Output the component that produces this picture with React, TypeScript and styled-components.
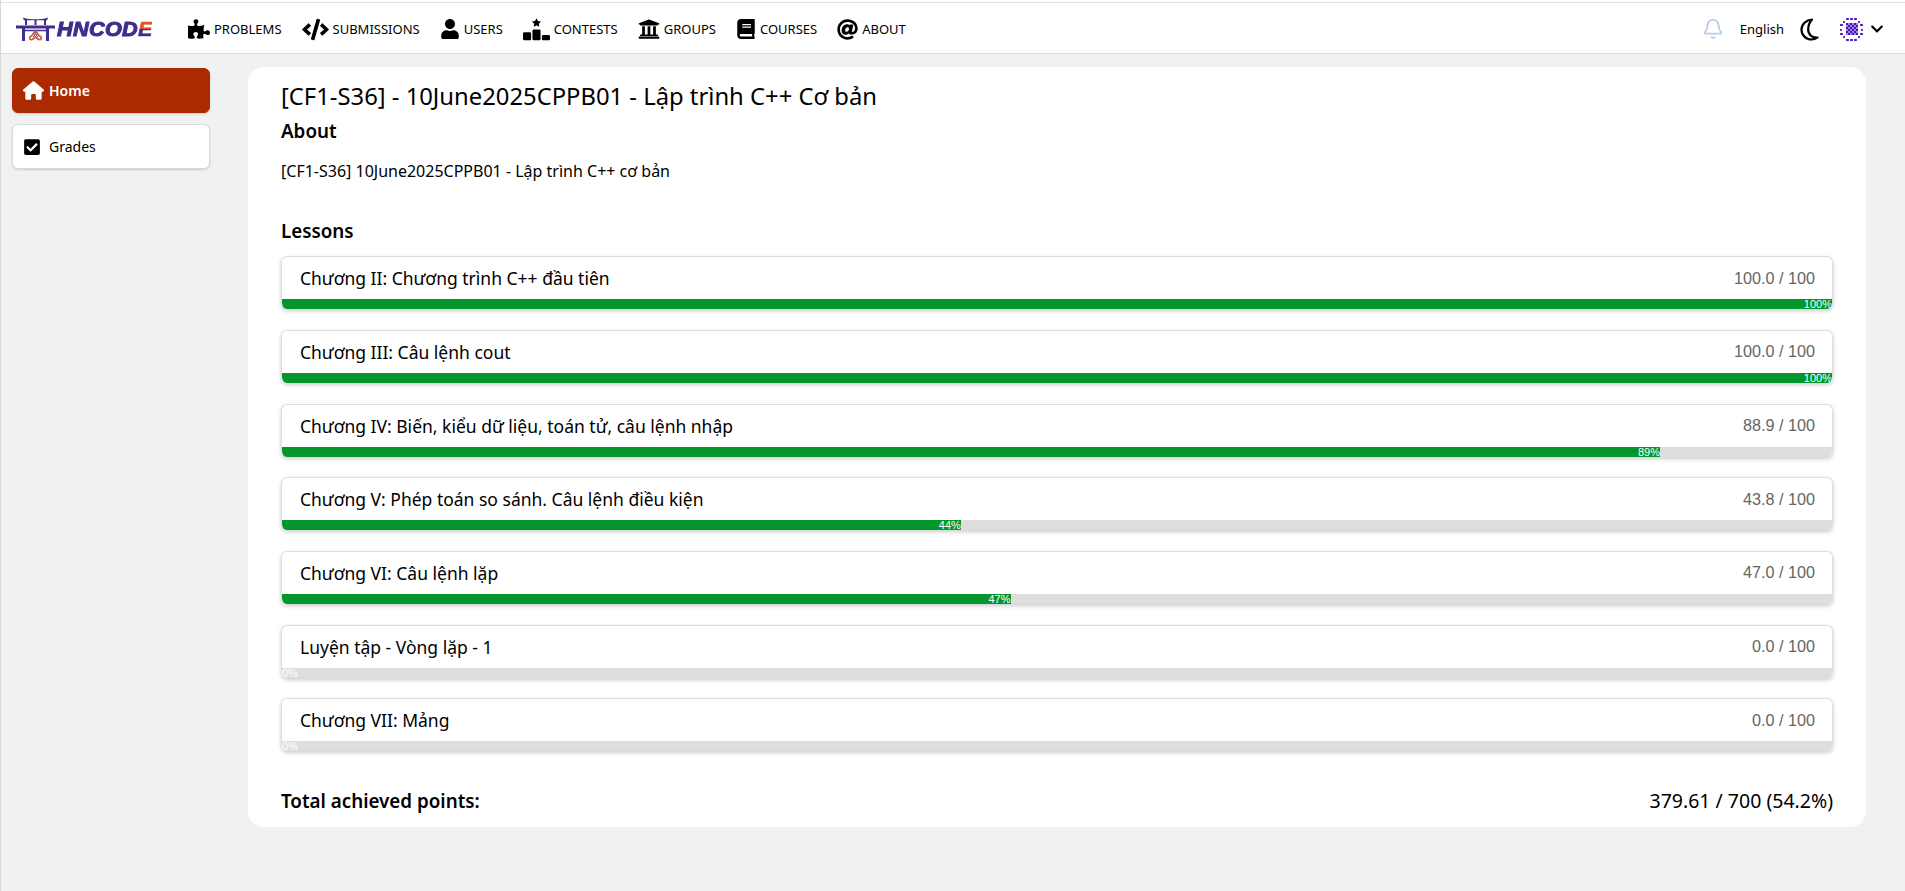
import React from 'react';
import styled, { createGlobalStyle } from 'styled-components';
import {
    FaAt,
    FaBook,
    FaCheckSquare,
    FaChevronDown,
    FaCode,
    FaPuzzlePiece,
    FaUniversity,
    FaUser,
} from 'react-icons/fa';
import { FaHouse, FaRankingStar } from 'react-icons/fa6';
import { Bell } from 'lucide-react';

const GlobalStyle = createGlobalStyle`
    html, body {
        margin: 0;
        padding: 0;
        background: #f0f2f1;
    }
    * {
        box-sizing: border-box;
    }
`;

const Page = styled.div`
    min-height: 891px;
    background: #f0f2f1;
    border-left: 1px solid #d8d8d8;
    font-family: "Noto Sans", sans-serif;
    color: #000;
`;

const TopBar = styled.header`
    height: 54px;
    background: #fff;
    border-top: 2px solid #fff;
    border-bottom: 1px solid #dcdcdc;
    box-shadow: inset 0 1px 0 #e2e2e2;
    display: flex;
    align-items: center;
    justify-content: space-between;
    padding: 3px 21px 0 15px;
`;

const LeftGroup = styled.div`
    display: flex;
    align-items: center;
`;

const Logo = styled.div`
    display: flex;
    align-items: center;
    width: 172px;
    gap: 2px;
`;

const LogoText = styled.span`
    font-family: "Liberation Sans", sans-serif;
    font-size: 19.5px;
    font-weight: 700;
    font-style: italic;
    letter-spacing: 0.3px;
    color: #3f2d8e;
    -webkit-text-stroke: 1px #3f2d8e;
    transform: scaleX(1.11);
    transform-origin: left center;
`;

const LogoAccent = styled.span`
    background: linear-gradient(to bottom, #e2552b 0 48%, #3f2d8e 48% 100%);
    -webkit-background-clip: text;
    background-clip: text;
    color: transparent;
    -webkit-text-stroke: 0.5px transparent;
`;

const NavList = styled.nav`
    display: flex;
    align-items: center;
    gap: 20px;
`;

const NavItem = styled.a`
    display: flex;
    align-items: center;
    gap: 4px;
    font-size: 13px;
    line-height: 18px;
    text-transform: uppercase;
    color: #000;
`;

const RightGroup = styled.div`
    display: flex;
    align-items: center;
`;

const LangLabel = styled.span`
    font-size: 13px;
    margin: 0 16px 0 16px;
`;

const Avatar = styled.svg`
    margin-left: 21px;
    margin-right: 7px;
`;

const Layout = styled.div`
    display: flex;
    align-items: flex-start;
    padding: 13px 38px 0 11px;
`;

const Sidebar = styled.aside`
    width: 198px;
    margin-right: 38px;
    display: flex;
    flex-direction: column;
    gap: 11px;
    margin-top: 1px;
`;

const SideItem = styled.a<{ $active?: boolean }>`
    height: 45px;
    display: flex;
    align-items: center;
    gap: 5px;
    padding-left: 10px;
    border-radius: 6px;
    font-size: 14px;
    font-weight: ${({ $active }) => ($active ? 600 : 400)};
    background: ${({ $active }) => ($active ? '#ab2a00' : '#fff')};
    color: ${({ $active }) => ($active ? '#fff' : '#000')};
    border: 1px solid ${({ $active }) => ($active ? '#ab2a00' : '#d9d9d9')};
    box-shadow: 0 1px 2px rgba(0, 0, 0, 0.15);
`;

const SideIcon = styled.span`
    width: 21px;
    display: flex;
    justify-content: flex-start;
`;

const Card = styled.main`
    width: 1618px;
    height: 760px;
    background: #fff;
    border-radius: 16px;
    padding: 12px 33px 0;
`;

const Title = styled.h2`
    margin: 0 0 5px;
    font-size: 23.8px;
    font-weight: 400;
    line-height: 34px;
`;

const SectionTitle = styled.h4`
    margin: 0;
    font-size: 18.8px;
    font-weight: 600;
    line-height: 26px;
`;

const AboutText = styled.p`
    margin: 16px 0 0;
    font-size: 16px;
    line-height: 22px;
`;

const LessonsBlock = styled.section`
    margin-top: 36px;
    display: flex;
    flex-direction: column;
    gap: 20.7px;
`;

const LessonList = styled.div`
    display: flex;
    flex-direction: column;
    gap: 20.7px;
    margin-top: -8.5px;
`;

const LessonRow = styled.div`
    height: 53px;
    display: flex;
    flex-direction: column;
    border: 1px solid #dedede;
    border-bottom: none;
    border-radius: 6px;
    overflow: hidden;
    box-shadow: 0 2px 4px rgba(0, 0, 0, 0.2);
`;

const LessonHead = styled.div`
    flex: 1;
    display: flex;
    align-items: center;
    justify-content: space-between;
    padding: 0 17px 0 18px;
    font-size: 17.5px;
`;

const LessonScore = styled.span`
    font-family: "Liberation Sans", sans-serif;
    color: #666;
    font-size: 16.2px;
`;

const Track = styled.div`
    height: 10px;
    background: #dedede;
`;

const Fill = styled.div`
    height: 100%;
    background: #02962c;
    color: #fff;
    font-family: "Liberation Sans", sans-serif;
    font-size: 11px;
    line-height: 11px;
    text-align: right;
    white-space: nowrap;
`;

const TotalRow = styled.div`
    margin-top: 36.5px;
    display: flex;
    justify-content: space-between;
    align-items: center;
    font-size: 19.5px;
    line-height: 26px;
`;

const TotalLabel = styled.span`
    font-size: 18.8px;
    font-weight: 600;
`;

interface Lesson {
    title: string;
    score: string;
    percent: number;
    label: string;
}

const lessons: Lesson[] = [
    { title: 'Chương II: Chương trình C++ đầu tiên', score: '100.0 / 100', percent: 100, label: '100%' },
    { title: 'Chương III: Câu lệnh cout', score: '100.0 / 100', percent: 100, label: '100%' },
    { title: 'Chương IV: Biến, kiểu dữ liệu, toán tử, câu lệnh nhập', score: '88.9 / 100', percent: 88.9, label: '89%' },
    { title: 'Chương V: Phép toán so sánh. Câu lệnh điều kiện', score: '43.8 / 100', percent: 43.8, label: '44%' },
    { title: 'Chương VI: Câu lệnh lặp', score: '47.0 / 100', percent: 47, label: '47%' },
    { title: 'Luyện tập - Vòng lặp - 1', score: '0.0 / 100', percent: 0, label: '0%' },
    { title: 'Chương VII: Mảng', score: '0.0 / 100', percent: 0, label: '0%' },
];

const GateIcon = () => (
    <svg width="39" height="24" viewBox="0 0 39 24" fill="none">
        {/* roof with raised ends */}
        <path d="M7 .5c4 1.500 8 1.800 12.500 1.800S28 2 32 .5l-.8 2.800H7.800z" fill="#3f2d8e" />
        <path d="M18.500 3h2v5h-2zM9 3h2v5H9zM28 3h2v5h-2z" fill="#3f2d8e" />
        {/* main beam */}
        <path d="M0 8.500h39V11.500H0z" fill="#3f2d8e" />
        <path d="M7.500 11v13M31.500 11v13" stroke="#3f2d8e" strokeWidth="3" />
        <path d="M9 13.500h21" stroke="#3f2d8e" strokeWidth="1.500" />
        <path d="M14.500 22.500c-1.800-1.200-.5-3.300 1.300-3.800l3.700-5 3.700 5c1.800.5 3.100 2.600 1.300 3.800-1.800 1-3.200-.8-5-2.500-1.800 1.700-3.200 3.500-5 2.500z" stroke="#d6512f" strokeWidth="1.600" />
        <path d="M19.500 16.500l-2 3.500M19.500 16.500l2 3.500" stroke="#3f2d8e" strokeWidth="1" />
    </svg>
);

const MoonIcon = () => (
    <svg width="19" height="23" viewBox="0 0 19 23" fill="none">
        <path d="M12 1.500C6 2 1.500 6.300 1.500 11.700c0 5.500 4.500 9.800 10 9.800 2.200 0 4.300-.7 6-2-5.500.5-9.300-3-9.300-8 0-4 1.500-7.500 3.800-10z" stroke="#000" strokeWidth="2.200" strokeLinejoin="round" />
    </svg>
);

// dots round the rim of the avatar, as [x, y, width, height]
const rimDots = [
    [6, 0, 3, 2], [10, 0, 3, 2], [14, 0, 3, 2],
    [6, 21, 3, 2], [10, 21, 3, 2], [14, 21, 3, 2],
    [0, 6, 3, 2], [0, 11, 2, 2], [0, 15, 3, 2],
    [20, 6, 3, 2], [21, 11, 2, 2], [20, 15, 3, 2],
    [3, 3, 2, 2], [18, 3, 2, 2], [3, 18, 2, 2], [18, 18, 2, 2],
];

const checkerCells = Array.from({ length: 36 }, (_, i) => [6 + (i % 6) * 2, 4 + Math.floor(i / 6) * 2 + 1, i]);

const Identicon = () => (
    <Avatar width="23" height="23" viewBox="0 0 23 23">
        {rimDots.map(([x, y, w, h]) => (
            <rect key={`${x}-${y}`} x={x} y={y} width={w} height={h} rx="0.8" fill="#4b12c4" />
        ))}
        {checkerCells.map(([x, y, i]) => (
            <rect
                key={i}
                x={x}
                y={y}
                width="2"
                height="2"
                fill={(i + Math.floor(i / 6)) % 2 === 0 ? '#4b12c4' : '#9c86e6'}
            />
        ))}
    </Avatar>
);

const App: React.FC = () => (
    <Page>
        <GlobalStyle />
        <TopBar>
            <LeftGroup>
                <Logo>
                    <GateIcon />
                    <LogoText>HNCOD<LogoAccent>E</LogoAccent></LogoText>
                </Logo>
                <NavList>
                    <NavItem><FaPuzzlePiece size={22} />Problems</NavItem>
                    <NavItem><FaCode size={27} />Submissions</NavItem>
                    <NavItem><FaUser size={20} />Users</NavItem>
                    <NavItem><FaRankingStar size={27} />Contests</NavItem>
                    <NavItem><FaUniversity size={22} />Groups</NavItem>
                    <NavItem><FaBook size={20} />Courses</NavItem>
                    <NavItem><FaAt size={21} />About</NavItem>
                </NavList>
            </LeftGroup>
            <RightGroup>
                <Bell size={22} color="#b9cbe8" />
                <LangLabel>English</LangLabel>
                <MoonIcon />
                <Identicon />
                <FaChevronDown size={14} />
            </RightGroup>
        </TopBar>
        <Layout>
            <Sidebar>
                <SideItem $active>
                    <SideIcon><FaHouse size={21} /></SideIcon>
                    Home
                </SideItem>
                <SideItem>
                    <SideIcon><FaCheckSquare size={18} /></SideIcon>
                    Grades
                </SideItem>
            </Sidebar>
            <Card>
                <Title>[CF1-S36] - 10June2025CPPB01 - Lập trình C++ Cơ bản</Title>
                <SectionTitle>About</SectionTitle>
                <AboutText>[CF1-S36] 10June2025CPPB01 - Lập trình C++ cơ bản</AboutText>
                <LessonsBlock>
                    <SectionTitle>Lessons</SectionTitle>
                    <LessonList>
                        {lessons.map((lesson) => (
                            <LessonRow key={lesson.title}>
                                <LessonHead>
                                    <span>{lesson.title}</span>
                                    <LessonScore>{lesson.score}</LessonScore>
                                </LessonHead>
                                <Track>
                                    <Fill style={{ width: `${lesson.percent}%` }}>{lesson.label}</Fill>
                                </Track>
                            </LessonRow>
                        ))}
                    </LessonList>
                </LessonsBlock>
                <TotalRow>
                    <TotalLabel>Total achieved points:</TotalLabel>
                    <span>379.61 / 700 (54.2%)</span>
                </TotalRow>
            </Card>
        </Layout>
    </Page>
);

export default App;
